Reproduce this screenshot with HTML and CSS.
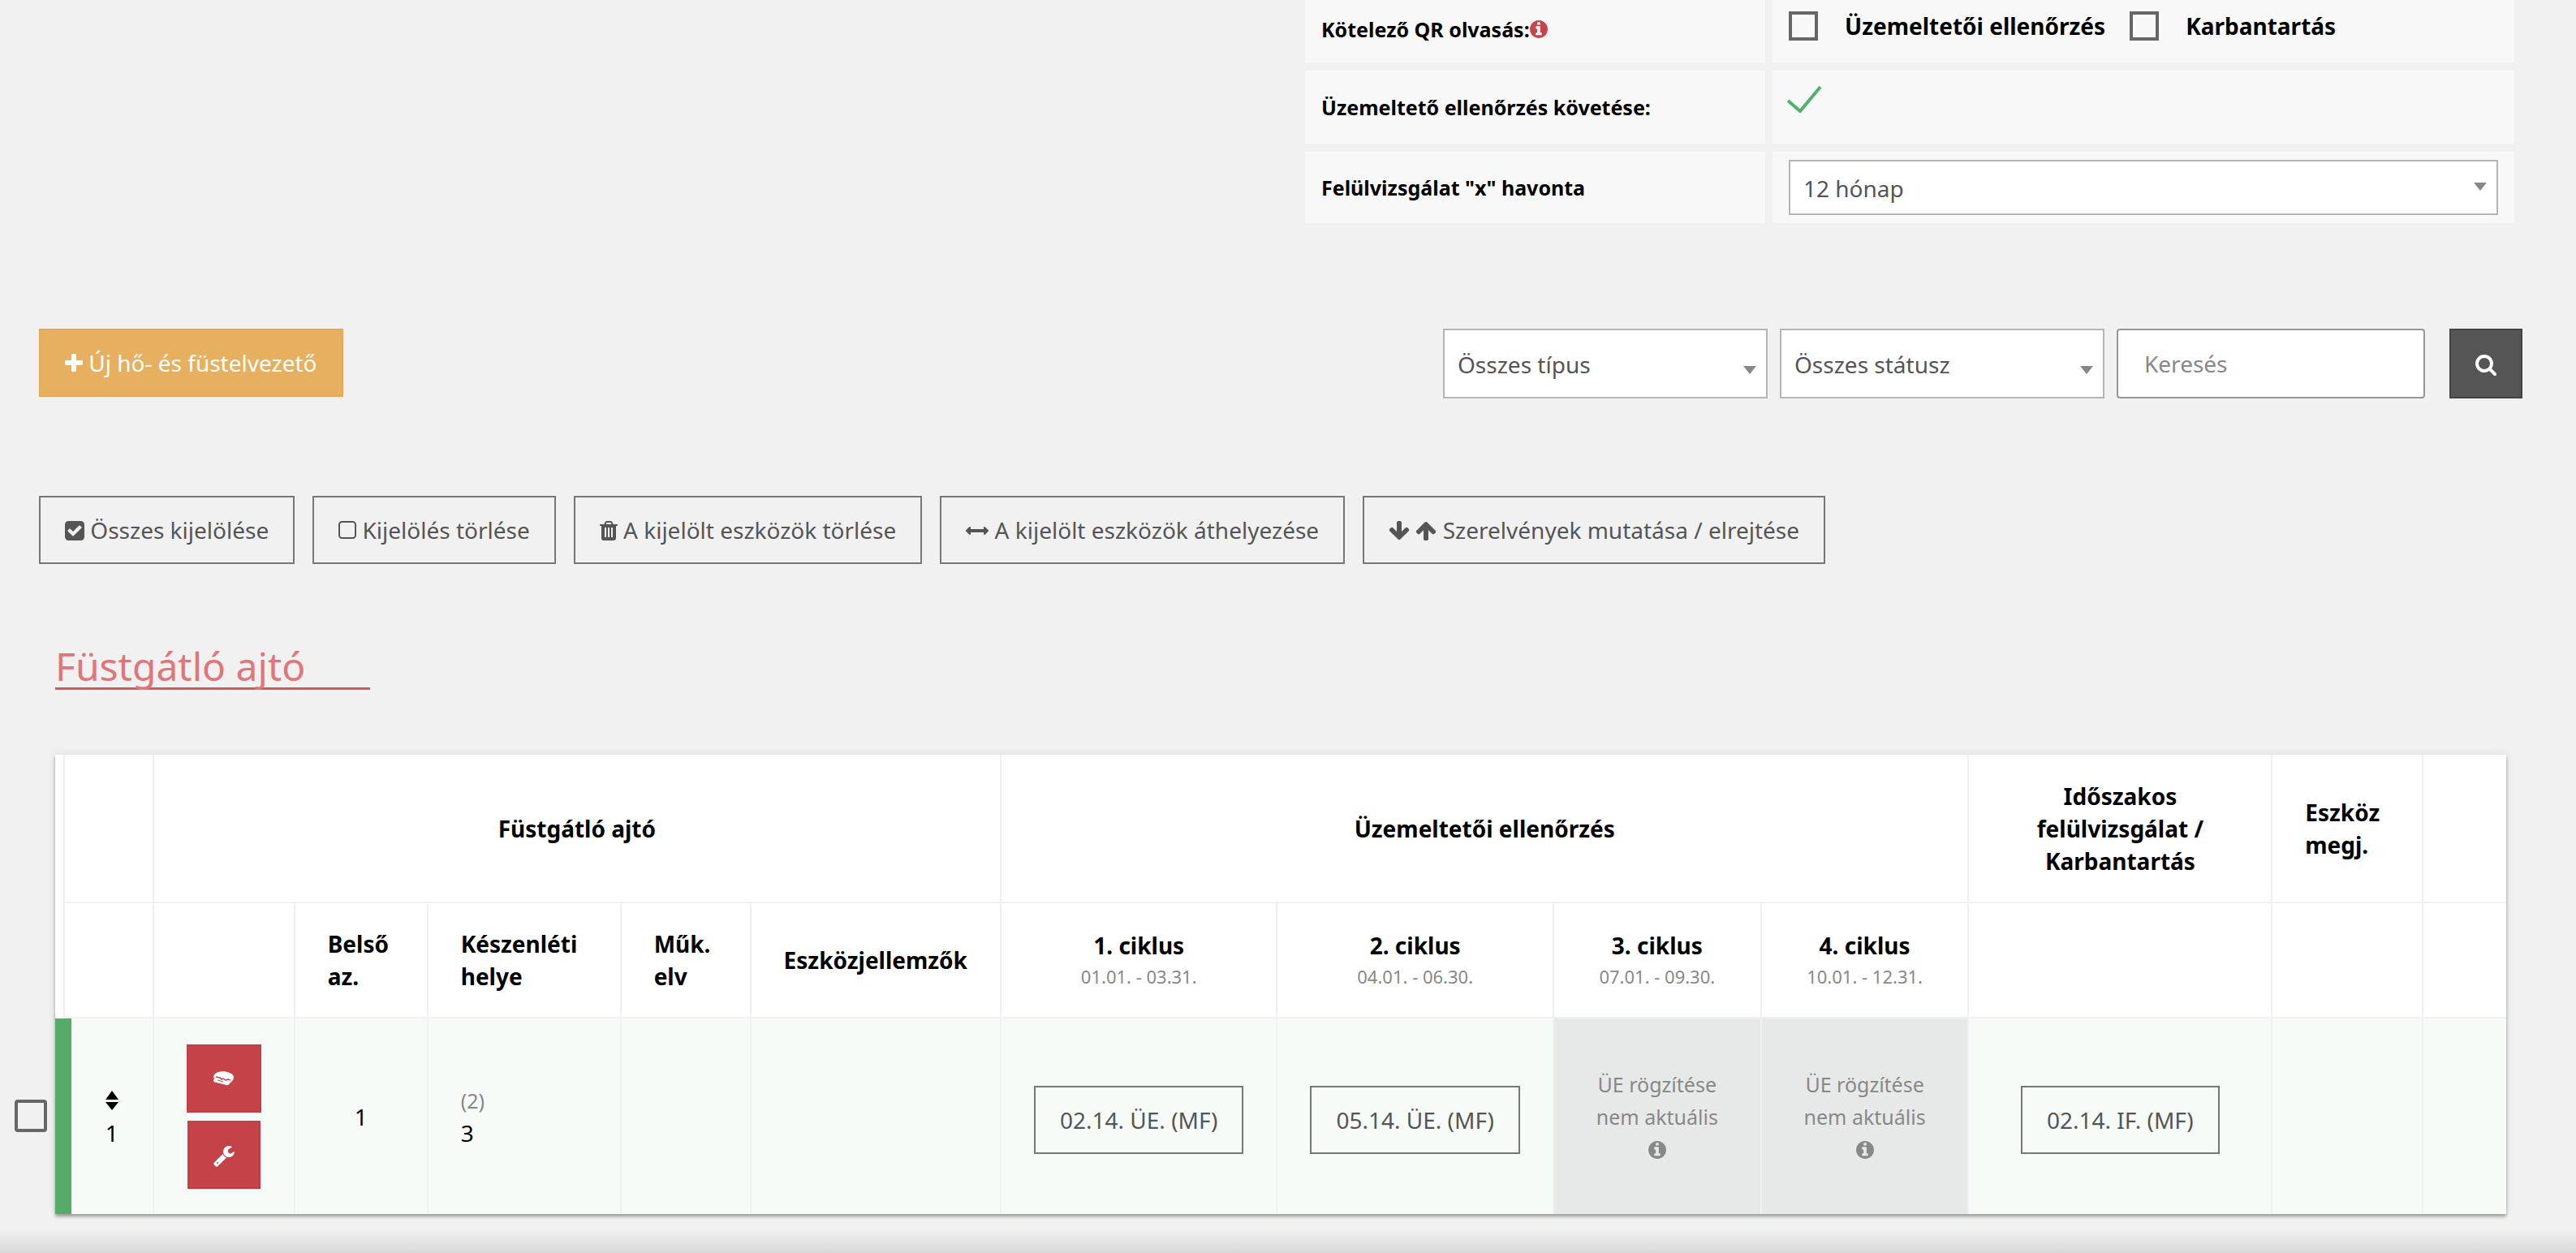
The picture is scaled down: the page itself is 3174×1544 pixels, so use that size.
FILE: index.html
```html
<!DOCTYPE html>
<html lang="hu">
<head>
    <meta charset="UTF-8">
    <meta name="viewport" content="width=device-width, initial-scale=1.0">
    <title>Füstgátló ajtó</title>
    <link rel="stylesheet" href="styles.css">
</head>
<body>
    <!-- Icon sprite -->
    <svg class="sprite" aria-hidden="true">
        <symbol id="plus" viewBox="192 0 1408 1792"><path d="M1600 736v192q0 40-28 68t-68 28h-416v416q0 40-28 68t-68 28h-192q-40 0-68-28t-28-68v-416h-416q-40 0-68-28t-28-68v-192q0-40 28-68t68-28h416v-416q0-40 28-68t68-28h192q40 0 68 28t28 68v416h416q40 0 68 28t28 68z"/></symbol>
        <symbol id="search" viewBox="64 0 1664 1792"><path d="M1216 832q0-185-131.5-316.5t-316.5-131.5-316.5 131.5-131.5 316.5 131.5 316.5 316.5 131.5 316.5-131.5 131.5-316.5zm512 832q0 52-38 90t-90 38q-54 0-90-38l-343-342q-179 124-399 124-143 0-273.5-55.5t-225-150-150-225-55.5-273.5 55.5-273.5 150-225 225-150 273.5-55.5 273.5 55.5 225 150 150 225 55.5 273.5q0 220-124 399l343 343q37 37 37 90z"/></symbol>
        <symbol id="info" viewBox="128 0 1536 1792"><path d="M1152 1376v-160q0-14-9-23t-23-9h-96v-512q0-14-9-23t-23-9h-320q-14 0-23 9t-9 23v160q0 14 9 23t23 9h96v320h-96q-14 0-23 9t-9 23v160q0 14 9 23t23 9h448q14 0 23-9t9-23zm-128-896v-160q0-14-9-23t-23-9h-192q-14 0-23 9t-9 23v160q0 14 9 23t23 9h192q14 0 23-9t9-23zm640 416q0 209-103 385.5t-279.5 279.5-385.5 103-385.5-103-279.5-279.5-103-385.5 103-385.5 279.5-279.5 385.5-103 385.5 103 279.5 279.5 103 385.5z"/></symbol>
        <symbol id="check-square" viewBox="128 0 1536 1792"><path d="M813 1299l614-614q19-19 19-45t-19-45l-102-102q-19-19-45-19t-45 19l-467 467-211-211q-19-19-45-19t-45 19l-102 102q-19 19-19 45t19 45l358 358q19 19 45 19t45-19zm851-883v960q0 119-84.5 203.5t-203.5 84.5h-960q-119 0-203.5-84.5t-84.5-203.5v-960q0-119 84.5-203.5t203.5-84.5h960q119 0 203.5 84.5t84.5 203.5z"/></symbol>
        <symbol id="square" viewBox="192 0 1408 1792"><rect x="256" y="192" width="1280" height="1280" rx="224" fill="none" stroke="currentColor" stroke-width="128"/></symbol>
        <symbol id="trash" viewBox="192 0 1408 1792"><path d="M704 1376v-704q0-14-9-23t-23-9h-64q-14 0-23 9t-9 23v704q0 14 9 23t23 9h64q14 0 23-9t9-23zm256 0v-704q0-14-9-23t-23-9h-64q-14 0-23 9t-9 23v704q0 14 9 23t23 9h64q14 0 23-9t9-23zm256 0v-704q0-14-9-23t-23-9h-64q-14 0-23 9t-9 23v704q0 14 9 23t23 9h64q14 0 23-9t9-23zm-544-992h448l-48-117q-7-9-17-11h-317q-10 2-17 11zm928 32v64q0 14-9 23t-23 9h-96v948q0 83-47 143.5t-113 60.5h-832q-66 0-113-58.5t-47-141.5v-952h-96q-14 0-23-9t-9-23v-64q0-14 9-23t23-9h309l70-167q15-37 54-63t79-26h320q40 0 79 26t54 63l70 167h309q14 0 23 9t9 23z"/></symbol>
        <symbol id="arrows-h" viewBox="0 0 1792 1792"><path d="M1792 896q0 26-19 45l-256 256q-19 19-45 19t-45-19-19-45v-128h-1024v128q0 26-19 45t-45 19-45-19l-256-256q-19-19-19-45t19-45l256-256q19-19 45-19t45 19 19 45v128h1024v-128q0-26 19-45t45-19 45 19l256 256q19 19 19 45z"/></symbol>
        <symbol id="arrow-down" viewBox="64 0 1664 1792"><path d="M1675 832q0 53-37 90l-651 652q-39 37-91 37-53 0-90-37l-651-652q-38-36-38-90 0-53 38-91l74-75q39-37 91-37 53 0 90 37l294 294v-704q0-52 38-90t90-38h128q52 0 90 38t38 90v704l294-294q37-37 90-37 52 0 91 37l75 75q37 39 37 91z"/></symbol>
        <symbol id="arrow-up" viewBox="64 0 1664 1792"><path d="M1675 971q0 51-37 90l-75 75q-38 38-91 38-54 0-90-38l-294-293v704q0 52-37.5 84.5t-90.5 32.5h-128q-53 0-90.5-32.5t-37.5-84.5v-704l-294 293q-36 38-90 38t-90-38l-75-75q-38-38-38-90 0-53 38-91l651-651q35-37 90-37 54 0 91 37l651 651q37 39 37 91z"/></symbol>
        <symbol id="sort" viewBox="0 0 16 24"><path d="M8 0l8 11H0zM8 24l8-10H0z"/></symbol>
        <symbol id="wrench" viewBox="64 0 1664 1792"><path d="M448 1472q0-26-19-45t-45-19-45 19-19 45 19 45 45 19 45-19 19-45zm644-420l-682 682q-37 37-90 37-52 0-91-37l-106-108q-38-36-38-90 0-53 38-91l681-681q39 98 114.5 173.5t173.5 114.5zm634-435q0 39-23 106-47 134-164.5 217.5t-258.5 83.5q-185 0-316.5-131.5t-131.5-316.5 131.5-316.5 316.5-131.5q58 0 121.5 16.5t107.5 46.5q16 11 16 28t-16 28l-293 169v224l193 107q5-3 79-48.5t135.5-81 70.5-35.5q15 0 23.5 10t8.5 25z"/></symbol>
        <symbol id="hand" viewBox="0 0 28 28"><path d="M1 12c0-4 3-6 6-7 4-1 10-1 14 1 3 1 5 3 5 6l-1 3-5 5q-1 2-3 1l-12-3q-3 0-4-2v-2l2-1z"/><path d="M4 11l5 1 2 2 2-1 3 2 3-1 3 1" fill="none" stroke="#c54248" stroke-width="1.5"/><path d="M6 15l7 2" fill="none" stroke="#c54248"/></symbol>
    </svg>

    <section class="settings">
        <div class="settings-label first">Kötelező QR olvasás:<svg class="icon icon-info"><use href="#info"/></svg></div>
        <div class="settings-value first">
            <label><input type="checkbox" class="box">Üzemeltetői ellenőrzés</label>
            <label><input type="checkbox" class="box">Karbantartás</label>
        </div>
        <div class="settings-label">Üzemeltető ellenőrzés követése:</div>
        <div class="settings-value followed">
            <svg class="tick" viewBox="0 0 44 34"><path d="M2 19l15 13L42 2" fill="none" stroke="#52b068" stroke-width="4"/></svg>
        </div>
        <label class="settings-label last" for="period">Felülvizsgálat "x" havonta</label>
        <div class="settings-value last">
            <select id="period" class="select period"><option>12 hónap</option></select>
        </div>
    </section>

    <div class="toolbar">
        <button class="btn btn-new"><svg class="icon w22"><use href="#plus"/></svg> Új hő- és füstelvezető</button>
        <form class="filters">
            <select class="select" aria-label="Típus"><option>Összes típus</option></select>
            <select class="select" aria-label="Státusz"><option>Összes státusz</option></select>
            <input type="text" class="search" placeholder="Keresés" aria-label="Keresés">
            <button type="button" class="btn btn-search" aria-label="Keresés indítása"><svg class="icon w26"><use href="#search"/></svg></button>
        </form>
    </div>

    <div class="actions">
        <button class="btn"><svg class="icon w24"><use href="#check-square"/></svg> Összes kijelölése</button>
        <button class="btn"><svg class="icon w22"><use href="#square"/></svg> Kijelölés törlése</button>
        <button class="btn"><svg class="icon w22"><use href="#trash"/></svg> A kijelölt eszközök törlése</button>
        <button class="btn"><svg class="icon w28"><use href="#arrows-h"/></svg> A kijelölt eszközök áthelyezése</button>
        <button class="btn"><svg class="icon w26"><use href="#arrow-down"/></svg> <svg class="icon w26"><use href="#arrow-up"/></svg> Szerelvények mutatása / elrejtése</button>
    </div>

    <h2 class="group-title">Füstgátló ajtó</h2>

    <div class="list">
        <div class="row-select"><input type="checkbox" class="box box-row" aria-label="Eszköz kijelölése"></div>
        <table class="devices">
            <colgroup>
                <col class="c-edge"><col class="c-order"><col class="c-tools"><col class="c-id"><col class="c-place"><col class="c-mode"><col class="c-props">
                <col class="c-done"><col class="c-done"><col class="c-later"><col class="c-later"><col class="c-review"><col class="c-note"><col class="c-end">
            </colgroup>
            <thead>
                <tr class="groups">
                    <th class="edge"></th>
                    <th></th>
                    <th colspan="5">Füstgátló ajtó</th>
                    <th colspan="4">Üzemeltetői ellenőrzés</th>
                    <th>Időszakos felülvizsgálat / Karbantartás</th>
                    <th class="left">Eszköz megj.</th>
                    <th></th>
                </tr>
                <tr class="names">
                    <th class="edge"></th>
                    <th></th>
                    <th></th>
                    <th class="left">Belső az.</th>
                    <th class="left">Készenléti helye</th>
                    <th class="left">Műk. elv</th>
                    <th class="left">Eszközjellemzők</th>
                    <th>1. ciklus<small>01.01. - 03.31.</small></th>
                    <th>2. ciklus<small>04.01. - 06.30.</small></th>
                    <th>3. ciklus<small>07.01. - 09.30.</small></th>
                    <th>4. ciklus<small>10.01. - 12.31.</small></th>
                    <th></th>
                    <th></th>
                    <th></th>
                </tr>
            </thead>
            <tbody>
                <tr>
                    <td colspan="2" class="order"><svg class="icon-sort"><use href="#sort"/></svg>1</td>
                    <td>
                        <div class="tools">
                            <button class="btn btn-red" aria-label="Ellenőrzés"><svg class="icon w28"><use href="#hand"/></svg></button>
                            <button class="btn btn-red" aria-label="Karbantartás"><svg class="icon w26"><use href="#wrench"/></svg></button>
                        </div>
                    </td>
                    <td>1</td>
                    <td class="left"><span class="muted">(2)</span><br>3</td>
                    <td></td>
                    <td></td>
                    <td><button class="btn btn-log">02.14. ÜE. (MF)</button></td>
                    <td><button class="btn btn-log">05.14. ÜE. (MF)</button></td>
                    <td class="inactive">ÜE rögzítése nem aktuális<br><svg class="icon icon-note"><use href="#info"/></svg></td>
                    <td class="inactive">ÜE rögzítése nem aktuális<br><svg class="icon icon-note"><use href="#info"/></svg></td>
                    <td><button class="btn btn-log">02.14. IF. (MF)</button></td>
                    <td></td>
                    <td></td>
                </tr>
            </tbody>
        </table>
    </div>

    <div class="page-end"></div>
</body>
</html>
```

FILE: styles.css
```css
* {
    box-sizing: border-box;
}
body {
    margin: 0;
    background-color: #f1f1f1;
    color: #000;
    font-family: "Noto Sans", sans-serif;
    font-size: 28px;
    line-height: 40px;
}
button, input, select {
    font-family: inherit;
    font-size: inherit;
    line-height: inherit;
    margin: 0;
}
.sprite {
    display: none;
}

/* Icons */
.icon {
    width: 28px;
    height: 28px;
    fill: currentColor;
    vertical-align: -4px;
}
.w22 { width: 22px; }
.w24 { width: 24px; }
.w26 { width: 26px; }
.w28 { width: 28px; }
.icon-info {
    width: 22px;
    height: 26px;
    color: #c9444a;
}
.icon-note {
    width: 22px;
    height: 26px;
}
.icon-sort {
    display: block;
    width: 16px;
    height: 24px;
    margin: 8px auto;
}

/* Settings */
.settings {
    display: grid;
    grid-template-columns: 567px 1fr;
    gap: 10px 9px;
    margin: 0 76px 130px calc(50% + 21px);
}
.settings-label,
.settings-value {
    display: flex;
    align-items: center;
    min-height: 90px;
    padding: 10px 20px;
    background-color: #f8f8f8;
    font-weight: bold;
}
.settings-label {
    font-size: 25px;
}
.settings-label.first {
    padding-bottom: 16px;
}
.settings-value.first {
    gap: 30px;
    padding-bottom: 24px;
}
.settings .first {
    min-height: 77px;
}
.settings .last {
    min-height: 88px;
}
.settings-value label {
    display: flex;
    align-items: center;
    gap: 33px;
}
.settings-value.followed {
    align-items: flex-start;
    padding: 18px 17px;
}
.tick {
    width: 44px;
    height: 34px;
}
.box {
    appearance: none;
    width: 36px;
    height: 36px;
    border: 4px solid #666;
    background-color: #f8f8f8;
}
.box-row {
    width: 40px;
    height: 40px;
    border-radius: 4px;
    background-color: #f1f1f1;
}

/* Form fields */
.select {
    appearance: none;
    width: 400px;
    height: 86px;
    padding: 2px 16px 0;
    border: 2px solid #b4b6b5;
    border-radius: 0;
    background: #fff url("data:image/svg+xml,%3Csvg xmlns='http://www.w3.org/2000/svg' width='16' height='10'%3E%3Cpath d='M0 0h16L8 10z' fill='%23888'/%3E%3C/svg%3E") no-repeat right 12px top 44px;
    color: #555;
}
.period {
    width: 100%;
    height: 68px;
    background-position: right 12px top 26px;
}
.search {
    width: 380px;
    height: 86px;
    padding: 0 32px;
    border: 2px solid #949796;
    border-radius: 4px;
    background-color: #fff;
    color: #555;
}
.search::placeholder {
    color: #888;
}

/* Buttons */
.btn {
    height: 84px;
    padding: 0 30px;
    border: 2px solid #777;
    border-radius: 0;
    background-color: transparent;
    color: #555;
    white-space: nowrap;
}
.btn-new {
    border-color: #e3a957;
    background-color: #e6b060;
    color: #fff;
}
.btn-search {
    height: 86px;
    margin-left: 15px;
    border-color: #444;
    background-color: #555;
    color: #fff;
}
.btn-red {
    border-color: #c13e44;
    background-color: #c54248;
    color: #fff;
}
.btn-log {
    margin-top: 8px;
}

.toolbar {
    display: flex;
    justify-content: space-between;
    align-items: flex-start;
    margin: 0 66px 120px 48px;
}
.filters {
    display: flex;
    gap: 15px;
}
.actions {
    display: flex;
    flex-wrap: wrap;
    gap: 22px;
    margin: 0 48px 100px;
}
.group-title {
    width: max-content;
    margin: 0 0 80px 68px;
    padding-right: 80px;
    border-bottom: 3px solid #d0595f;
    color: #e0757a;
    font-size: 48px;
    font-weight: normal;
    line-height: 52px;
}

/* Device list */
.list {
    display: flex;
    align-items: flex-end;
    margin-right: 86px;
}
.row-select {
    display: flex;
    align-items: center;
    flex: 0 0 68px;
    height: 242px;
    padding-left: 18px;
}
.devices {
    flex: 1;
    border-spacing: 0;
    background-color: #fff;
    box-shadow: 0 3px 4px rgba(0, 0, 0, 0.35), 0 -2px 12px rgba(0, 0, 0, 0.06);
}
.c-edge { width: 12px; }
.c-order { width: 110px; }
.c-tools { width: 174px; }
.c-id { width: 164px; }
.c-place { width: 238px; }
.c-mode { width: 160px; }
.c-props { width: 308px; }
.c-done { width: 340px; }
.c-later { width: 256px; }
.c-review { width: 374px; }
.c-note { width: 186px; }
.c-end { width: 102px; }
.devices th,
.devices td {
    padding: 30px 40px;
    border-right: 2px solid #f0f0f0;
    text-align: center;
    vertical-align: middle;
}
.devices th {
    border-bottom: 2px solid #f0f0f0;
}
.devices th:empty,
.devices td:empty {
    padding: 0;
}
.devices th:last-child,
.devices td:last-child {
    border-right: none;
}
.devices .edge {
    border-bottom: none;
}
.devices .left {
    text-align: left;
}
.groups th {
    height: 183px;
}
.names th {
    height: 142px;
}
.devices th small {
    display: block;
    color: #888;
    font-size: 22px;
    font-weight: normal;
    line-height: 36px;
}
.devices td {
    height: 241px;
    background-color: #f6fbf7;
}
.devices .order {
    padding: 0 0 0 20px;
    box-shadow: inset 20px 0 0 #55ab67;
}
.devices .inactive {
    background-color: #e7e9e8;
    color: #888;
    font-size: 25px;
}
.muted {
    color: #888;
    font-size: 25px;
}
.tools {
    display: flex;
    flex-direction: column;
    align-items: center;
    gap: 10px;
}

/* Shade at the bottom of the page */
.page-end {
    height: 31px;
    margin-top: 18px;
    background-image: linear-gradient(#f1f1f1, #d8d8d8);
}
```
